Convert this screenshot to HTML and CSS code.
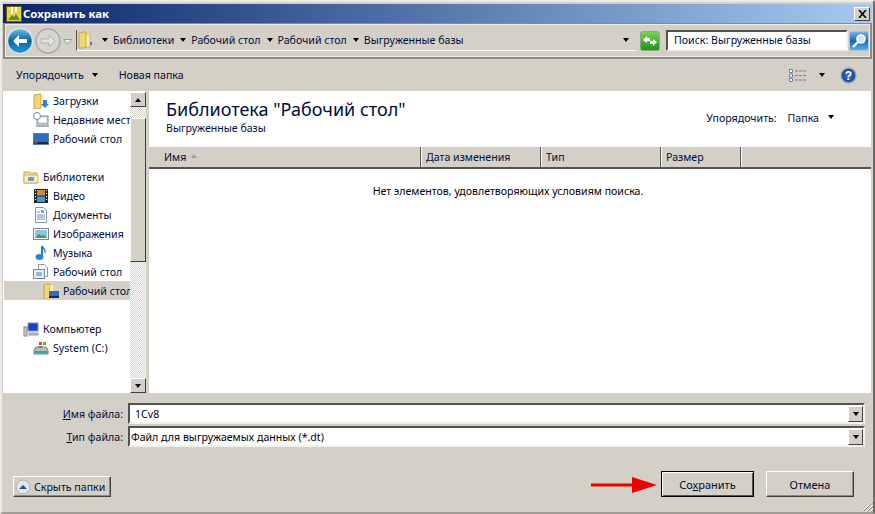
FILE: index.html
```html
<!DOCTYPE html>
<html lang="ru">
<head>
<meta charset="utf-8">
<title>Сохранить как</title>
<link rel="stylesheet" href="styles.css">
</head>
<body>
<div class="window">
  <header class="titlebar">
    <svg class="title-icon" width="16" height="16" viewBox="0 0 16 16"><rect x=".5" y=".5" width="15" height="15" fill="#e8d24a" stroke="#6b5a10"/><path d="M2 14l4-5 2 2 2-3 4 6z" fill="#5b8c2a"/><path d="M6 1v7M10 1v5" stroke="#fff" stroke-width="2"/></svg>
    <span class="title-text">Сохранить как</span>
    <button class="close"><svg width="9" height="8" viewBox="0 0 9 8"><path d="M1 0l7 8M8 0L1 8" stroke="#000" stroke-width="1.6"/></svg></button>
  </header>

  <div class="navbar">
    <svg class="nav-round" width="28" height="28" viewBox="0 0 28 28"><defs><linearGradient id="bk" x1="0" y1="0" x2="0" y2="1"><stop offset="0" stop-color="#6cc0ea"/><stop offset=".5" stop-color="#0d62a5"/><stop offset="1" stop-color="#1fa0d8"/></linearGradient></defs><circle cx="14" cy="14" r="12.5" fill="url(#bk)" stroke="#d8e4ec" stroke-width="1.5"/><path d="M7 14l6-6v4h8v4h-8v4z" fill="#fff"/></svg>
    <svg class="nav-round fwd" width="26" height="26" viewBox="0 0 26 26"><circle cx="13" cy="13" r="12" fill="#d6d5d1" stroke="#a8a8a8" stroke-width="1.5"/><path d="M20 13l-6-6v4H6v4h8v4z" fill="#e4e4e4" stroke="#b0b0b0"/></svg>
    <svg class="nav-drop" width="9" height="6" viewBox="0 0 9 6"><path d="M.5.5h8L4.5 5z" fill="#eee" stroke="#999"/></svg>
    <div class="address">
      <svg class="crumb-icon" width="15" height="18" viewBox="0 0 15 18"><path d="M1 2l5-1h2v15l-2 1H1z" fill="#f2d675" stroke="#c7a84c"/><path d="M8 3h4v13H8z" fill="#fbeaa5" stroke="#d3b65c"/><rect x="12" y="11" width="2" height="3" fill="#3f7fc0"/></svg>
      <i class="tri crumb-tri"></i><span class="crumb">Библиотеки</span>
      <i class="tri crumb-tri"></i><span class="crumb">Рабочий стол</span>
      <i class="tri crumb-tri"></i><span class="crumb">Рабочий стол</span>
      <i class="tri crumb-tri"></i><span class="crumb">Выгруженные базы</span>
      <i class="tri address-tri"></i>
    </div>
    <svg class="go" width="20" height="20" viewBox="0 0 20 20"><defs><linearGradient id="gr" x1="0" y1="0" x2="0" y2="1"><stop offset="0" stop-color="#7fd05a"/><stop offset="1" stop-color="#159a12"/></linearGradient></defs><rect x=".5" y=".5" width="19" height="19" rx="2" fill="url(#gr)" stroke="#8fa88a"/><path d="M3 9l4-4v2h3v3H7v2zM17 11l-4 4v-2h-3v-3h3V8z" fill="#fff"/></svg>
    <div class="search">Поиск: Выгруженные базы</div>
    <svg class="search-btn" width="20" height="20" viewBox="0 0 20 20"><defs><linearGradient id="sb" x1="0" y1="0" x2="0" y2="1"><stop offset="0" stop-color="#7fb4ea"/><stop offset=".5" stop-color="#1e63c0"/><stop offset="1" stop-color="#58b4ea"/></linearGradient></defs><rect x=".5" y=".5" width="19" height="19" rx="2" fill="url(#sb)" stroke="#a8c4e0"/><circle cx="12" cy="8" r="4" fill="#cfe4f6" stroke="#fff" stroke-width="1.6"/><path d="M9 11l-5 5" stroke="#fff" stroke-width="2.4"/></svg>
  </div>

  <div class="toolbar">
    <span class="tool">Упорядочить</span><i class="tri tool-tri"></i>
    <span class="tool new-folder">Новая папка</span>
    <svg class="views" width="17" height="13" viewBox="0 0 17 13"><path d="M.5.5h3v3h-3zM.5 5h3v3h-3zM.5 9.500h3v3h-3z" fill="#fff" stroke="#6f7f95"/><path d="M6 2h3M10 2h3M14 2h3M6 6.500h3M10 6.500h3M14 6.500h3M6 11h3M10 11h3M14 11h3" stroke="#6f7f95"/></svg>
    <i class="tri views-tri"></i>
    <svg class="help" width="17" height="17" viewBox="0 0 17 17"><defs><radialGradient id="hp"><stop offset="0" stop-color="#3c6fd0"/><stop offset="1" stop-color="#1c3f94"/></radialGradient></defs><circle cx="8.500" cy="8.500" r="7.500" fill="url(#hp)" stroke="#9aa8bd" stroke-width="1.400"/><text x="8.500" y="12.500" text-anchor="middle" class="help-q">?</text></svg>
  </div>

  <main class="main">
    <nav class="sidebar">
      <div class="tree">
        <div class="row l2"><svg width="16" height="16" viewBox="0 0 16 16"><path d="M1 2l5-1h2v14l-2 1H1z" fill="#f2d675" stroke="#c7a84c"/><path d="M8 2h3v8H8z" fill="#fbeaa5"/><path d="M10 7h4v4h2l-4 4-4-4h2z" fill="#2f86d8"/></svg><span>Загрузки</span></div>
        <div class="row l2"><svg width="16" height="16" viewBox="0 0 16 16"><rect x="4" y="4" width="11" height="8" fill="#dfe3e6" stroke="#7d8791"/><rect x="6" y="6" width="7" height="4" fill="#fff"/><rect x="3" y="13" width="13" height="2" fill="#a9b0b6"/><circle cx="4" cy="4" r="3.500" fill="#fff" stroke="#7d8791"/></svg><span>Недавние мест</span></div>
        <div class="row l2"><svg width="16" height="16" viewBox="0 0 16 16"><rect x=".5" y="2.500" width="15" height="11" fill="#2a6fc4" stroke="#5a7ea8"/><rect x="1" y="11" width="14" height="2" fill="#1d2c44"/><rect x="2" y="11" width="2" height="1.500" fill="#d9482c"/></svg><span>Рабочий стол</span></div>
        <div class="row"></div>
        <div class="row l1"><svg width="16" height="16" viewBox="0 0 16 16"><path d="M1 3h5l1 1h7v10H1z" fill="#f3dc8c" stroke="#c7a84c"/><path d="M1 6h14v8H1z" fill="#fbeebc" stroke="#cdb25e"/><path d="M5 8h6v4H5z" fill="#5fa3d8"/></svg><span>Библиотеки</span></div>
        <div class="row l2"><svg width="16" height="16" viewBox="0 0 16 16"><rect x="1" y="1" width="14" height="14" fill="#1c2a30"/><rect x="4" y="2" width="8" height="5.500" fill="#d9873a"/><rect x="4" y="8.500" width="8" height="5.500" fill="#3d9ad6"/><path d="M2 2h1v1H2zM2 5h1v1H2zM2 8h1v1H2zM2 11h1v1H2zM13 2h1v1h-1zM13 5h1v1h-1zM13 8h1v1h-1zM13 11h1v1h-1z" fill="#fff"/></svg><span>Видео</span></div>
        <div class="row l2"><svg width="16" height="16" viewBox="0 0 16 16"><path d="M2.500.5h8l3 3v12h-11z" fill="#fff" stroke="#8a94a0"/><path d="M4 5h3M4 8h8M4 10h8M4 12h8" stroke="#6f93c4"/><rect x="8" y="3" width="3" height="3" fill="#7fa8d8"/></svg><span>Документы</span></div>
        <div class="row l2"><svg width="16" height="16" viewBox="0 0 16 16"><rect x=".5" y="2.500" width="15" height="11" fill="#fff" stroke="#7d8791"/><rect x="2" y="4" width="12" height="8" fill="#8fc4e8"/><path d="M2 12l4-4 3 2 2-1 3 3z" fill="#4f9458"/></svg><span>Изображения</span></div>
        <div class="row l2"><svg width="16" height="16" viewBox="0 0 16 16"><path d="M9 1v10" stroke="#2376d0" stroke-width="2"/><ellipse cx="6.500" cy="12" rx="4" ry="3" fill="#2a82dc"/><path d="M9 1c1 3 4 3 3 7" fill="none" stroke="#2376d0" stroke-width="1.500"/></svg><span>Музыка</span></div>
        <div class="row l2"><svg width="16" height="16" viewBox="0 0 16 16"><path d="M5.500.5h6l3 3v9h-9z" fill="#fff" stroke="#8a94a0"/><rect x=".5" y="5.500" width="11" height="9" fill="#e8f0f8" stroke="#6f87a4"/><rect x="3" y="8" width="6" height="4" fill="#8fb8e0"/></svg><span>Рабочий стол</span></div>
        <div class="row l3 selected"><svg width="16" height="16" viewBox="0 0 16 16"><path d="M1 2l4-1h2v14l-2 1H1z" fill="#f2d675" stroke="#c7a84c"/><path d="M7 2h3v8H7z" fill="#fbeaa5"/><rect x="6" y="8" width="10" height="7" fill="#2a6fc4"/><rect x="6" y="13" width="10" height="2" fill="#1d2c44"/></svg><span>Рабочий стол</span></div>
        <div class="row"></div>
        <div class="row l1"><svg width="16" height="16" viewBox="0 0 16 16"><rect x="5" y="2" width="10" height="8" fill="#1a3fd0" stroke="#8a94a0"/><path d="M6 12h9v2H6z" fill="#c8cdd2" stroke="#8a94a0"/><rect x="1" y="6" width="3" height="9" fill="#c8d0c8" stroke="#7d8791"/></svg><span>Компьютер</span></div>
        <div class="row l2"><svg width="16" height="16" viewBox="0 0 16 16"><path d="M1 10l2-3h10l2 3v4H1z" fill="#b4bcc4" stroke="#6f7a85"/><rect x="2" y="11" width="12" height="2" fill="#3ea0a8"/><path d="M6 2h3v3H6z" fill="#e0462c"/><path d="M10 2h3v3h-3z" fill="#5fb03c"/><path d="M6 6h3v2H6z" fill="#3f7fd8"/><path d="M10 6h3v2h-3z" fill="#eac22c"/></svg><span>System (C:)</span></div>
      </div>
      <div class="scrollbar">
        <button class="sb-btn"><i class="tri up"></i></button>
        <div class="sb-track short"></div>
        <div class="sb-thumb"></div>
        <div class="sb-track"></div>
        <button class="sb-btn"><i class="tri"></i></button>
      </div>
    </nav>
    <section class="content">
      <div class="lib-head">
        <div class="lib-titles">
          <h1>Библиотека "Рабочий стол"</h1>
          <p>Выгруженные базы</p>
        </div>
        <div class="arrange"><span>Упорядочить:</span><span class="arrange-val">Папка</span><i class="tri arrange-tri"></i></div>
      </div>
      <div class="columns">
        <div class="col c1">Имя<i class="tri up sort"></i></div>
        <div class="col c2">Дата изменения</div>
        <div class="col c3">Тип</div>
        <div class="col c4">Размер</div>
      </div>
      <p class="empty">Нет элементов, удовлетворяющих условиям поиска.</p>
    </section>
  </main>

  <div class="form">
    <div class="form-row">
      <label class="form-label"><u>И</u>мя файла:</label>
      <div class="combo"><span class="combo-name">1Cv8</span><button class="combo-btn"><i class="tri"></i></button></div>
    </div>
    <div class="form-row">
      <label class="form-label"><u>Т</u>ип файла:</label>
      <div class="combo"><span>Файл для выгружаемых данных (*.dt)</span><button class="combo-btn"><i class="tri"></i></button></div>
    </div>
  </div>

  <footer class="footer">
    <button class="btn hide-btn"><svg width="16" height="16" viewBox="0 0 16 16"><circle cx="8" cy="8" r="7" fill="#e4e6ea" stroke="#a8acb4"/><path d="M4 10l4-4 4 4z" fill="#2b4f96"/></svg>Скрыть папки</button>
    <button class="btn save">Со<u>х</u>ранить</button>
    <button class="btn cancel">Отмена</button>
  </footer>

  <svg class="red-arrow" width="66" height="16" viewBox="0 0 66 16"><path d="M0 6.500h41V0l25 8-25 8V9.500H0z" fill="#f00000"/></svg>
  <svg class="grip" width="12" height="12" viewBox="0 0 12 12"><path d="M12 1L1 12M12 5l-7 7M12 9l-3 3" stroke="#fff"/><path d="M12 2L2 12M12 6l-6 6M12 10l-2 2" stroke="#8a8780"/></svg>
</div>
</body>
</html>
```
FILE: styles.css
```css
* { box-sizing: border-box; }
html, body { margin: 0; padding: 0; }
body { width: 875px; height: 514px; overflow: hidden; background: #d4d0c8; font-family: "Noto Sans", sans-serif; font-size: 10.6px; color: #000c3a; }
button { font: inherit; color: inherit; padding: 0; margin: 0; }
u { text-decoration: underline; }
.window { position: relative; width: 875px; height: 514px; background: #d4d0c8; border-top: 2px solid #ecebe6; border-left: 2px solid #ecebe6; border-right: 2px solid #6e6c66; border-bottom: 2px solid #a09d96; padding: 2px 1px 0 1px; }
.tri { display: inline-block; width: 0; height: 0; border-left: 3.5px solid transparent; border-right: 3.5px solid transparent; border-top: 4px solid #000; flex: none; }
.tri.up { border-top: 0; border-bottom: 4px solid #000; }

.titlebar { height: 19px; display: flex; align-items: center; padding: 0 2px 0 3px; background: linear-gradient(90deg, #0a246a, #a6caf0); }
.title-icon { flex: none; }
.title-text { margin-left: 1px; color: #fff; font-weight: 700; font-size: 11.4px; }
.close { margin-left: auto; width: 16px; height: 14px; background: #d4d0c8; border: 1px solid; border-color: #fff #404040 #404040 #fff; display: flex; align-items: center; justify-content: center; }

.navbar { height: 36px; display: flex; align-items: center; border: 2px solid #8c8a84; border-width: 1px 2px 2px 2px; box-shadow: inset 0 0 0 1px #ecebe6; padding-left: 1px; }
.nav-round { flex: none; }
.fwd { margin-left: 1px; }
.nav-drop { margin: 2px 0 0 2px; flex: none; }
.address { width: 560px; height: 21px; margin-left: 4px; display: flex; align-items: center; background: #d4d0c8; border-left: 1px solid #55534e; border-bottom: 1px solid #fff; padding-left: 1px; }
.crumb-icon { flex: none; }
.crumb { margin-left: 5px; white-space: nowrap; }
.crumb-tri { margin-left: 6px; }
.crumb-icon + .crumb-tri { margin-left: 9px; }
.address-tri { margin-left: auto; margin-right: 7px; }
.go { flex: none; margin-left: 4px; }
.search { width: 182px; height: 21px; margin-left: 6px; background: #fff; border: 2px solid; border-color: #55534e #f2f1ec #f2f1ec #55534e; padding-left: 6px; line-height: 17px; white-space: nowrap; }
.search-btn { flex: none; margin-left: 1px; }

.toolbar { height: 32px; display: flex; align-items: center; padding: 0 0 0 13px; }
.tool { white-space: nowrap; }
.tool-tri { margin-left: 8px; }
.new-folder { margin-left: 21px; }
.views { margin-left: auto; flex: none; }
.views-tri { margin-left: 13px; }
.help { flex: none; margin: 0 15px 0 15px; }
.help-q { font-size: 12px; font-weight: 700; fill: #fff; font-family: "Liberation Sans", sans-serif; }

.main { height: 302px; display: flex; background: #fff; margin-right: 1px; }
.sidebar { width: 146px; flex: none; display: flex; border-right: 3px solid #d4d0c8; }
.tree { width: 127px; flex: none; overflow: hidden; padding-left: 1px; }
.row { height: 19px; display: flex; align-items: center; white-space: nowrap; }
.row svg { flex: none; margin-right: 4px; }
.l1 { padding-left: 19px; }
.l2 { padding-left: 29px; }
.l3 { padding-left: 39px; }
.selected { background: #d4d0c8; }
.scrollbar { width: 16px; flex: none; display: flex; flex-direction: column; padding-top: 1px; }
.sb-btn { height: 15px; flex: none; background: #d4d0c8; border: 1px solid; border-color: #fff #404040 #404040 #fff; display: flex; align-items: center; justify-content: center; }
.sb-track { flex: 1; background: repeating-conic-gradient(#d4d0c8 0 25%, #fff 0 50%) 0 0 / 2px 2px; }
.sb-track.short { flex: none; height: 11px; }
.sb-thumb { height: 144px; flex: none; background: #d4d0c8; border: 1px solid; border-color: #fff #404040 #404040 #fff; }

.content { flex: 1; min-width: 0; }
.lib-head { height: 56px; display: flex; }
.lib-titles { padding: 7px 0 0 17px; }
h1 { margin: 0; font-size: 18px; font-weight: 400; line-height: 22px; white-space: nowrap; }
.lib-titles p { margin: 1px 0 0; line-height: 15px; }
.arrange { margin-left: auto; padding: 20px 37px 0 0; display: flex; align-items: flex-start; line-height: 15px; }
.arrange-val { margin-left: 11px; }
.arrange-tri { margin: 4px 0 0 9px; }
.columns { height: 22px; display: flex; background: #d4d0c8; border-bottom: 2px solid #55534e; line-height: 20px; }
.col { padding-left: 5px; border-right: 1px solid #55534e; box-shadow: 1px 0 0 #fff; white-space: nowrap; display: flex; align-items: center; }
.c1 { width: 272px; padding-left: 15px; }
.c2 { width: 120px; }
.c3 { width: 120px; }
.c4 { width: 80px; }
.tri.up.sort { margin: 0 0 2px 5px; border-bottom-color: #a09d96; }
.empty { margin: 15px 0 0; padding-right: 4px; text-align: center; line-height: 15px; color: #000; }

.form { padding-top: 9px; height: 59px; }
.form-row { display: flex; align-items: center; height: 23px; }
.form-label { width: 120px; text-align: right; white-space: nowrap; }
.combo { width: 737px; height: 21px; margin-left: 5px; background: #fff; border: 2px solid; border-color: #55534e #f2f1ec #f2f1ec #55534e; display: flex; align-items: center; padding-left: 1px; color: #000; }
.combo-name { margin-left: 4px; }
.combo-btn { margin-left: auto; width: 15px; height: 16px; background: #d4d0c8; border: 1px solid; border-color: #fff #404040 #404040 #fff; display: flex; align-items: center; justify-content: center; }

.footer { display: flex; align-items: flex-start; padding: 19px 18px 0 10px; }
.btn { background: #d4d0c8; border: 1px solid; border-color: #fff #404040 #404040 #fff; box-shadow: inset -1px -1px 0 #8c8a84; }
.hide-btn { width: 98px; height: 21px; margin-top: 5px; display: flex; align-items: center; gap: 3px; padding-left: 1px; white-space: nowrap; }
.save { width: 93px; height: 26px; margin-left: auto; border: 1px solid #000; box-shadow: inset 1px 1px 0 #fff, inset -1px -1px 0 #55534e; font-size: 11px; }
.cancel { width: 88px; height: 26px; margin-left: 12px; font-size: 11px; }

.red-arrow { position: absolute; left: 589px; top: 475px; }
.grip { position: absolute; right: 0; bottom: 0; }
```
